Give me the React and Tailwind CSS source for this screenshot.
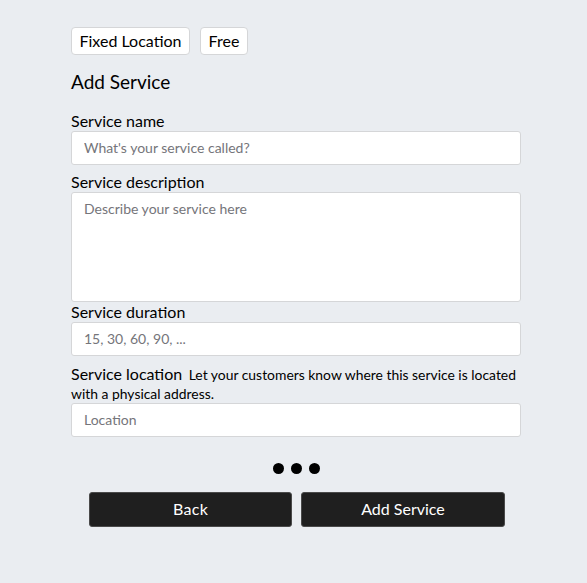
function Field({ label, placeholder }) {
  return (
    <div>
      <label className="block text-[16px] leading-[20px] text-black">{label}</label>
      <input readOnly placeholder={placeholder} className="block h-[34px] w-full rounded-[3px] border border-[#d5d6d8] bg-white px-3 pb-[1px] text-[14px] text-black outline-none placeholder:text-[#75757a]" />
    </div>
  );
}
export default function App() {
  return (
    <div className="min-h-[583px] bg-[#eaedf1] font-['Lato',sans-serif] text-black">
      <div className="ml-[71px] w-[450px] pt-[27px]">
        <div className="flex gap-[10px]">
          <span className="flex h-[28px] w-[119px] items-center justify-center rounded-[4px] border border-[#d5d6d8] bg-white text-[16px]">Fixed Location</span>
          <span className="flex h-[28px] w-[48px] items-center justify-center rounded-[4px] border border-[#d5d6d8] bg-white text-[16px]">Free</span>
        </div>
        <h2 className="mt-[15px] text-[19px] leading-[24px] font-normal">Add Service</h2>
        <div className="mt-[17px]">
          <Field label="Service name" placeholder="What's your service called?" />
          <div className="mt-[7px]">
            <label className="block text-[16px] leading-[20px]">Service description</label>
            <textarea readOnly placeholder="Describe your service here" className="block h-[110px] w-full resize-none rounded-[3px] border border-[#d5d6d8] bg-white px-3 py-[5px] text-[14px] outline-none placeholder:text-[#75757a]" />
          </div>
          <Field label="Service duration" placeholder="15, 30, 60, 90, ..." />
          <div className="mt-[7px]">
            <div className="pt-[2px] text-[13.9px] leading-[19px]">
              <span className="mr-[6.5px] text-[16px] leading-[16px]">Service location</span>
              <span>Let your customers know where this service is located with a physical address.</span>
            </div>
            <input readOnly placeholder="Location" className="block h-[34px] w-full rounded-[3px] border border-[#d5d6d8] bg-white px-3 pb-[1px] text-[14px] outline-none placeholder:text-[#75757a]" />
          </div>
        </div>
        <div className="mt-[26px] flex justify-center gap-[7px]">
          <span className="h-[11px] w-[11px] rounded-full bg-black" />
          <span className="h-[11px] w-[11px] rounded-full bg-black" />
          <span className="h-[11px] w-[11px] rounded-full bg-black" />
        </div>
        <div className="mt-[18px] ml-[18px] flex gap-[9px]">
          <button className="h-[35px] w-[203px] rounded-[3px] border border-[#4a4a4a] bg-[#1f1f1f] pb-[1px] text-[16px] tracking-[0.3px] text-white">Back</button>
          <button className="h-[35px] w-[204px] rounded-[3px] border border-[#4a4a4a] bg-[#1f1f1f] pb-[1px] text-[16px] text-white">Add Service</button>
        </div>
      </div>
    </div>
  );
}
